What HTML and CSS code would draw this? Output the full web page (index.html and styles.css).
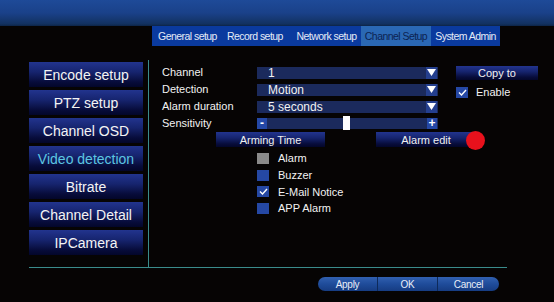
FILE: index.html
```html
<!DOCTYPE html>
<html>
<head>
<meta charset="utf-8">
<link rel="stylesheet" href="styles.css">
</head>
<body>
<div class="topbar"></div>
<div class="tabs">
  <div class="tab t1">General setup</div>
  <div class="tab t2">Record setup</div>
  <div class="tab t3">Network setup</div>
  <div class="tab t4 active">Channel Setup</div>
  <div class="tab t5">System Admin</div>
</div>
<div class="main">
  <div class="nav">
    <div class="navbtn">Encode setup</div>
    <div class="navbtn">PTZ setup</div>
    <div class="navbtn">Channel OSD</div>
    <div class="navbtn current">Video detection</div>
    <div class="navbtn">Bitrate</div>
    <div class="navbtn">Channel Detail</div>
    <div class="navbtn">IPCamera</div>
  </div>
  <div class="panel">
    <div class="top">
      <div class="form">
        <div class="lbl">Channel</div>
        <div class="cell"><div class="select"><span class="val">1</span><span class="arrow"><svg width="9" height="7" viewBox="0 0 9 7"><path d="M0 0H9L4.5 7Z" fill="#fff"/></svg></span></div></div>
        <div class="lbl">Detection</div>
        <div class="cell"><div class="select"><span class="val">Motion</span><span class="arrow"><svg width="9" height="7" viewBox="0 0 9 7"><path d="M0 0H9L4.5 7Z" fill="#fff"/></svg></span></div></div>
        <div class="lbl">Alarm duration</div>
        <div class="cell"><div class="select"><span class="val">5 seconds</span><span class="arrow"><svg width="9" height="7" viewBox="0 0 9 7"><path d="M0 0H9L4.5 7Z" fill="#fff"/></svg></span></div></div>
        <div class="lbl">Sensitivity</div>
        <div class="cell"><div class="slider"><span class="sbtn">-</span><span class="track"><span class="thumb"></span></span><span class="sbtn">+</span></div></div>
      </div>
      <div class="side">
        <div class="btn copy">Copy to</div>
        <div class="enable"><span class="box on"><svg width="9" height="7" viewBox="0 0 9 7"><path d="M1 3.5L3.5 6L8 1" stroke="#fff" stroke-width="1.4" fill="none"/></svg></span><span>Enable</span></div>
      </div>
    </div>
    <div class="actions">
      <div class="btn arming">Arming Time</div>
      <div class="btn alarmedit">Alarm edit<span class="dot"></span></div>
    </div>
    <div class="checks">
      <div class="chk"><span class="box gray"></span><span>Alarm</span></div>
      <div class="chk"><span class="box"></span><span>Buzzer</span></div>
      <div class="chk"><span class="box on"><svg width="9" height="7" viewBox="0 0 9 7"><path d="M1 3.5L3.5 6L8 1" stroke="#fff" stroke-width="1.4" fill="none"/></svg></span><span>E-Mail Notice</span></div>
      <div class="chk"><span class="box"></span><span>APP Alarm</span></div>
    </div>
  </div>
</div>
<div class="rule"></div>
<div class="footer">
  <div class="fbtn first">Apply</div>
  <div class="fbtn">OK</div>
  <div class="fbtn last">Cancel</div>
</div>
</body>
</html>
```
FILE: styles.css
```css
* { box-sizing: border-box; }
html, body { margin: 0; padding: 0; }
body {
  width: 554px;
  height: 302px;
  overflow: hidden;
  background: #060404;
  font-family: "Liberation Sans", Arial, sans-serif;
  color: #f2f2f2;
}
.topbar {
  height: 26px;
  background: linear-gradient(#1e4a98 0%, #1a4189 50%, #123160 92%, #0d2446 100%);
}
.tabs {
  display: flex;
  margin-left: 152px;
  width: 348px;
  height: 20px;
  background: #0a3a9e;
  font-size: 10.5px;
  letter-spacing: -0.55px;
  color: #e4eaf6;
}
.tab { display: flex; align-items: center; justify-content: center; height: 100%; }
.t1 { width: 71px; }
.t2 { width: 69px; justify-content: flex-start; padding-left: 4px; }
.t3 { width: 69px; }
.t4 { width: 70px; }
.t5 { width: 69px; }
.tab.active { background: #2a68b4; color: #0c2352; }

.main {
  display: flex;
  height: 207px;
  margin-left: 29px;
  margin-top: 14px;
}
.nav {
  width: 114px;
  padding-top: 2px;
  display: flex;
  flex-direction: column;
  gap: 3px;
}
.navbtn {
  height: 25px;
  display: flex;
  align-items: center;
  justify-content: center;
  font-size: 14px;
  color: #f4f4f4;
  background: linear-gradient(#22348e 0%, #16246e 40%, #070c3a 80%, #03062a 100%);
}
.navbtn.current { color: #5cc6e2; }
.panel {
  margin-left: 5px;
  border-left: 1px solid #3a8c8c;
  padding-left: 13px;
  padding-top: 4px;
  display: flex;
  flex-direction: column;
}
.top { display: flex; }
.form {
  display: grid;
  grid-template-columns: 95px 181px;
  grid-auto-rows: 17px;
}
.lbl { font-size: 11px; display: flex; align-items: center; padding-bottom: 1px; }
.cell { display: flex; align-items: center; }
.select {
  position: relative;
  width: 181px;
  height: 12px;
  background: #1b2a5c;
  display: flex;
  align-items: center;
  justify-content: space-between;
}
.val { font-size: 12px; padding-left: 11px; line-height: 12px; }
.arrow {
  width: 11px;
  height: 12px;
  background: #243f8e;
  display: flex;
  align-items: center;
  justify-content: center;
  margin-right: 1px;
}
.slider {
  width: 181px;
  height: 11px;
  background: #1b2a5c;
  display: flex;
  align-items: center;
}
.sbtn {
  width: 10px;
  height: 11px;
  background: #2448a6;
  font-size: 12px;
  font-weight: bold;
  line-height: 10px;
  text-align: center;
  color: #fff;
}
.sbtn:last-child { margin-right: 1px; }
.track { flex: 1; position: relative; height: 11px; }
.thumb {
  position: absolute;
  left: 76px;
  top: -2px;
  width: 7px;
  height: 14px;
  background: #fdfdfd;
}
.side {
  margin-left: 18px;
  width: 82px;
  padding-top: 2px;
}
.btn {
  display: flex;
  align-items: center;
  justify-content: center;
  font-size: 11px;
  color: #f0f0f0;
  background: linear-gradient(#22348e 0%, #16246e 40%, #070c3a 80%, #03062a 100%);
}
.copy { height: 14px; width: 82px; }
.enable {
  display: flex;
  align-items: center;
  gap: 8px;
  margin-top: 6px;
  font-size: 11px;
}
.box {
  width: 12px;
  height: 11px;
  background: #2548a4;
  display: inline-flex;
  align-items: center;
  justify-content: center;
}
.box.gray { background: #8a8a8a; }
.actions {
  display: flex;
  height: 15px;
}
.arming { width: 109px; margin-left: 54px; }
.alarmedit { width: 100px; margin-left: 51px; position: relative; }
.dot {
  position: absolute;
  right: -9px;
  top: -1px;
  width: 19px;
  height: 19px;
  border-radius: 50%;
  background: #e8111c;
}
.checks {
  margin-top: 3px;
  margin-left: 95px;
  display: flex;
  flex-direction: column;
}
.chk {
  height: 16.7px;
  display: flex;
  align-items: center;
  gap: 9px;
  font-size: 11px;
}
.rule {
  margin-left: 29px;
  width: 478px;
  height: 1px;
  background: #3a8c8c;
}
.footer {
  display: flex;
  margin-left: 318px;
  margin-top: 9px;
  height: 14px;
}
.fbtn {
  width: 60px;
  height: 14px;
  display: flex;
  align-items: center;
  justify-content: center;
  font-size: 10px;
  letter-spacing: -0.3px;
  color: #e8eef8;
  background: linear-gradient(#3160b0 0%, #1f4c9a 50%, #163c82 100%);
  border-right: 1px solid #0e2a5a;
}
.fbtn.first { border-radius: 7px 0 0 7px; }
.fbtn.last { border-radius: 0 7px 7px 0; border-right: none; width: 61px; }
```
